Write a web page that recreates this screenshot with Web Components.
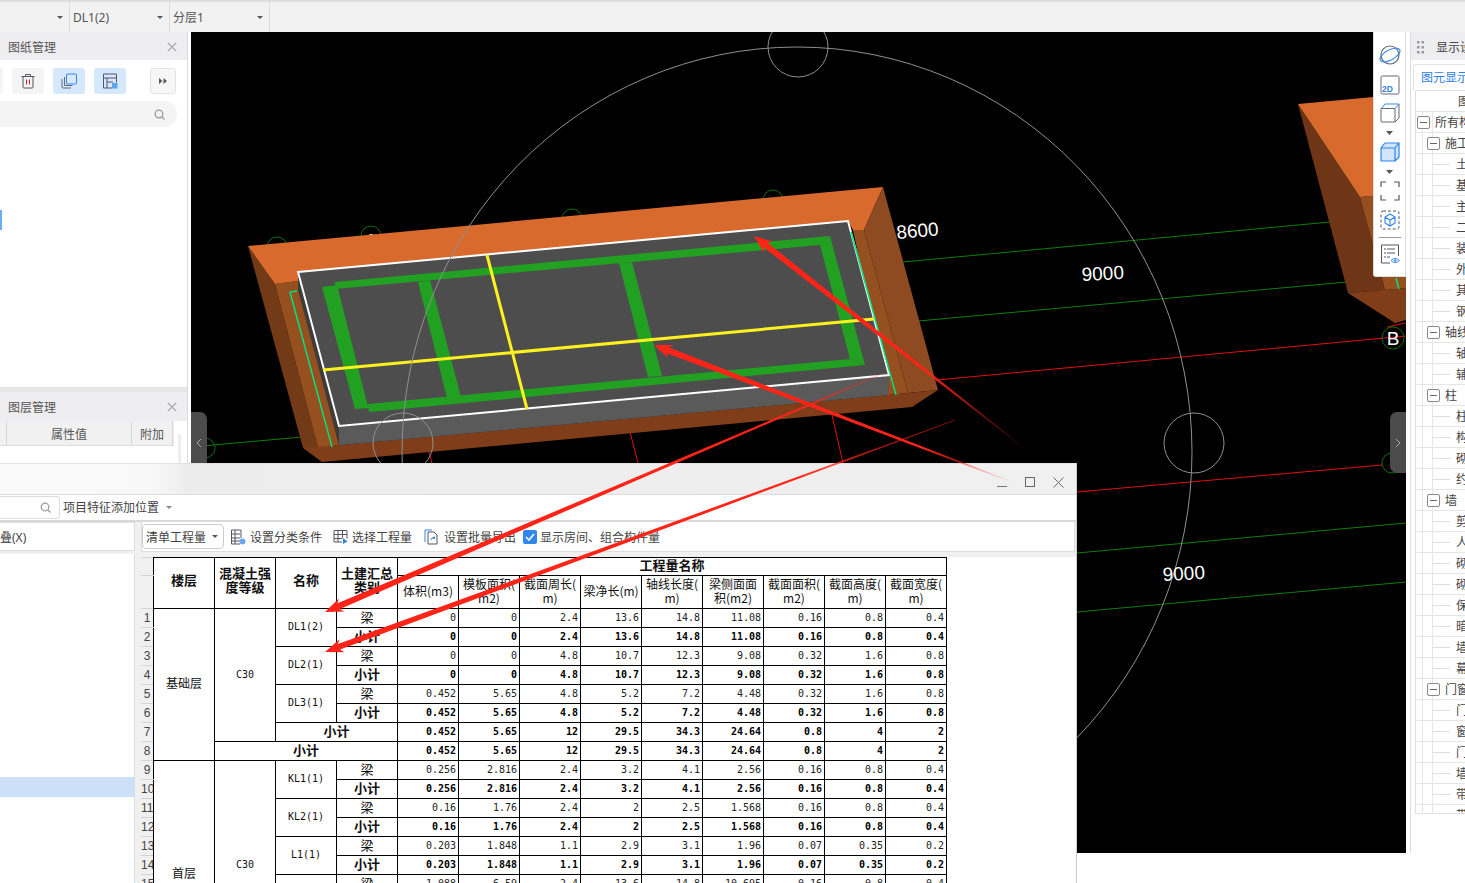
<!DOCTYPE html>
<html lang="zh">
<head>
<meta charset="utf-8">
<title>工程量</title>
<style>
    html, body { margin: 0; padding: 0; background: #fff; }
    body {
        position: relative;
        width: 1465px;
        height: 883px;
        overflow: hidden;
        font: 12px "Noto Sans", "Noto Sans CJK SC", sans-serif;
        color: #555;
    }
</style>
</head>
<body>
<app-frame>
    <top-bar slot="top"></top-bar>
    <left-column slot="left"></left-column>
    <cad-view slot="main"></cad-view>
    <right-panel slot="right"></right-panel>
</app-frame>
<float-window>
    <qty-table></qty-table>
</float-window>
<arrow-marks></arrow-marks>

<script>
const UI_FONT = '"Noto Sans", "Noto Sans CJK SC", sans-serif';

class AppFrame extends HTMLElement {
    constructor() {
        super();
        this.attachShadow({ mode: 'open' });
        this.shadowRoot.innerHTML = `
            <style>
                :host {
                    display: grid;
                    grid-template-columns: 188px 3px 1215px 4px 55px;
                    grid-template-rows: 32px 821px 30px;
                    width: 1465px;
                    height: 883px;
                }
                ::slotted([slot=top]) { grid-column: 1 / -1; grid-row: 1; }
                ::slotted([slot=left]) { grid-column: 1; grid-row: 2; }
                ::slotted([slot=main]) { grid-column: 3; grid-row: 2; }
                ::slotted([slot=right]) { grid-column: 5; grid-row: 2; }
            </style>
            <slot name="top"></slot>
            <slot name="left"></slot>
            <slot name="main"></slot>
            <slot name="right"></slot>
        `;
    }
}

class TopSelect extends HTMLElement {
    constructor() {
        super();
        this.attachShadow({ mode: 'open' });
        this.shadowRoot.innerHTML = `
            <style>
                :host {
                    display: flex;
                    align-items: center;
                    justify-content: space-between;
                    box-sizing: border-box;
                    height: 30px;
                    padding: 0 6px 0 3px;
                    border-right: 1px solid #dcdcdc;
                    font: 12px ${UI_FONT};
                    color: #555;
                }
                i {
                    width: 0;
                    height: 0;
                    border-left: 3px solid transparent;
                    border-right: 3px solid transparent;
                    border-top: 3px solid #555;
                }
            </style>
            <span><slot></slot></span><i></i>
        `;
    }
}

class TopBar extends HTMLElement {
    constructor() {
        super();
        this.attachShadow({ mode: 'open' });
        this.shadowRoot.innerHTML = `
            <style>
                :host {
                    display: flex;
                    box-sizing: border-box;
                    height: 32px;
                    background: #f2f2f2;
                    border-top: 2px solid #dedede;
                }
                top-select:nth-of-type(1) { width: 70px; }
                top-select:nth-of-type(2) { width: 100px; }
                top-select:nth-of-type(3) { width: 100px; }
            </style>
            <top-select></top-select>
            <top-select>DL1(2)</top-select>
            <top-select>分层1</top-select>
        `;
    }
}

class SidePanel extends HTMLElement {
    constructor() {
        super();
        this.attachShadow({ mode: 'open' });
        this.shadowRoot.innerHTML = `
            <style>
                :host {
                    display: flex;
                    flex-direction: column;
                    background: #fff;
                    overflow: hidden;
                }
                header {
                    display: flex;
                    flex: none;
                    align-items: center;
                    justify-content: space-between;
                    box-sizing: border-box;
                    height: var(--head-height, 28px);
                    padding: var(--head-pad, 0) 10px 0 8px;
                    background: #eeeef0;
                    font: 12px ${UI_FONT};
                    color: #555;
                }
                svg { display: block; }
            </style>
            <header>
                <span></span>
                <svg width="10" height="10" viewBox="0 0 10 10"><path d="M1 1l8 8M9 1l-8 8" stroke="#aaa" stroke-width="1.2"/></svg>
            </header>
            <slot></slot>
        `;
    }

    connectedCallback() {
        this.shadowRoot.querySelector('span').textContent = this.getAttribute('label') || '';
    }
}

class LeftColumn extends HTMLElement {
    constructor() {
        super();
        this.attachShadow({ mode: 'open' });
        this.shadowRoot.innerHTML = `
            <style>
                :host {
                    display: flex;
                    flex-direction: column;
                    gap: 5px;
                    box-sizing: border-box;
                    height: 821px;
                    background: #e6e6e6;
                    border-right: 1px solid #dcdcdc;
                    font: 12px ${UI_FONT};
                    color: #555;
                }
                .drawings { height: 355px; flex: none; --head-pad: 2px; }
                .layers { flex: 1; --head-height: 29px; }
                .tools {
                    display: flex;
                    align-items: center;
                    gap: 9px;
                    height: 26px;
                    margin: 8px 0 0 -29px;
                }
                .btn {
                    display: flex;
                    align-items: center;
                    justify-content: center;
                    width: 32px;
                    height: 26px;
                    border-radius: 3px;
                    background: #f4f4f4;
                    flex: none;
                }
                .btn.on { background: #d6e8fc; }
                .btn.play {
                    box-sizing: border-box;
                    width: 26px;
                    margin-left: 15px;
                    border: 1px solid #e2e2e2;
                    background: #f7f7f7;
                }
                .search {
                    display: flex;
                    align-items: center;
                    justify-content: flex-end;
                    box-sizing: border-box;
                    width: 177px;
                    height: 26px;
                    margin-top: 7px;
                    padding-right: 12px;
                    border-radius: 0 13px 13px 0;
                    background: #f4f4f4;
                }
                .mark {
                    position: absolute;
                    left: 0;
                    top: 210px;
                    width: 2px;
                    height: 20px;
                    background: #6aaef5;
                }
                .head {
                    display: grid;
                    grid-template-columns: 7px 125px 41px;
                    height: 24px;
                    background: #f1f1f1;
                    border-bottom: 1px solid #ddd;
                    width: 174px;
                }
                .head span {
                    display: flex;
                    align-items: center;
                    justify-content: center;
                    padding-top: 2px;
                    border-right: 1px solid #d6d6d6;
                }
                .track {
                    position: absolute;
                    left: 178px;
                    top: 434px;
                    width: 3px;
                    height: 40px;
                    border-radius: 2px;
                    background: #eee;
                }
                svg { display: block; }
            </style>
            <side-panel class="drawings" label="图纸管理">
                <div class="tools">
                    <div class="btn"></div>
                    <div class="btn">
                        <svg width="16" height="16" viewBox="0 0 16 16" fill="none" stroke="#556">
                            <path d="M1.5 3.5h13M5.5 3.5V1.5h5v2M3 3.5v10.5a1 1 0 0 0 1 1h8a1 1 0 0 0 1-1V3.5"/>
                            <path d="M6.5 6.5v5M9.5 6.5v5" stroke="#e02020"/>
                        </svg>
                    </div>
                    <div class="btn on">
                        <svg width="16" height="16" viewBox="0 0 16 16" fill="none">
                            <path d="M1 6v8a1 1 0 0 0 1 1h8M3.5 4v8.5h8" stroke="#667"/>
                            <rect x="5.5" y="1" width="10" height="10" rx="1" stroke="#2f86ec"/>
                        </svg>
                    </div>
                    <div class="btn on">
                        <svg width="16" height="16" viewBox="0 0 16 16" fill="none" stroke="#556">
                            <path d="M10 15H1.500V1h13v8.500M1.500 5h13M5 5v10M5 9h6"/>
                            <rect x="10" y="10" width="5.500" height="5.500" fill="#5fa2ee" stroke="none"/>
                        </svg>
                    </div>
                    <div class="btn play">
                        <svg width="8" height="6" viewBox="0 0 8 6" fill="#556"><path d="M0 0l3.500 3L0 6zM4.500 0L8 3 4.500 6z"/></svg>
                    </div>
                </div>
                <div class="search">
                    <svg width="11" height="11" viewBox="0 0 11 11" fill="none" stroke="#999" stroke-width="1.300"><circle cx="5" cy="5" r="3.800"/><path d="M8 8l2.500 2.500"/></svg>
                </div>
                <div class="mark"></div>
            </side-panel>
            <side-panel class="layers" label="图层管理">
                <div class="head"><span></span><span>属性值</span><span>附加</span></div>
                <div class="track"></div>
            </side-panel>
        `;
    }
}

class CadView extends HTMLElement {
    constructor() {
        super();
        this.attachShadow({ mode: 'open' });
        this.shadowRoot.innerHTML = `
            <style>
                :host {
                    display: block;
                    position: relative;
                    width: 1215px;
                    height: 821px;
                    background: #000;
                    overflow: hidden;
                }
                svg.scene { display: block; }
                text { font-family: "Liberation Sans", sans-serif; fill: #fff; }
                .handle {
                    position: absolute;
                    top: 380px;
                    width: 16px;
                    height: 61px;
                    background: #4b4b4b;
                    display: flex;
                    align-items: center;
                    justify-content: center;
                }
                .handle.l { left: 0; border-radius: 0 7px 7px 0; }
                .handle.r { right: 0; border-radius: 7px 0 0 7px; }
            </style>
            <svg class="scene" width="1215" height="821" viewBox="191 32 1215 821">
                <!-- axis lines behind the model -->
                <g fill="none" stroke-width="1">
                    <path d="M191 447L302 437M903 262L1330 222M918 321L1347 282M1077 553L1406 523M1077 612L1406 582" stroke="#0a800a"/>
                    <path d="M937 380L1406 336M1077 492L1382 465M630 432L638 463M832 415L843 463M429 452L432 463M1387 327L1406 323" stroke="#e01010"/>
                    <path d="M843 462L955 420" stroke="#701008"/>
                    <g stroke="#0a6e0a">
                        <circle cx="277" cy="247" r="10"/>
                        <circle cx="371" cy="236" r="10"/>
                        <circle cx="572" cy="219" r="10"/>
                        <circle cx="773" cy="200" r="10"/>
                        <circle cx="205" cy="448" r="10"/>
                        <circle cx="1392" cy="463" r="10"/>
                        <circle cx="1393" cy="338" r="11"/>
                    </g>
                </g>
                <g font-size="13" text-anchor="middle">
                    <text x="277" y="254">1</text>
                    <text x="371" y="243">2</text>
                    <text x="572" y="226">3</text>
                    <text x="775" y="207">4</text>
                </g>
                <text x="1393" y="345" font-size="19" text-anchor="middle">B</text>

                <!-- far block, cut by the toolbar -->
                <polygon points="1298,104 1360,197 1385,290 1348,293" fill="#6e3616"/>
                <polygon points="1360,197 1406,193 1406,288 1385,290" fill="#96501f"/>
                <polygon points="1298,104 1406,94 1406,193 1360,197" fill="#d96a2e"/>
                <polygon points="1348,293 1406,288 1406,320 1395,323" fill="#7f3d1a"/>
                <path d="M1396 278L1399 289" stroke="#00e080" stroke-width="1.500"/>

                <!-- model -->
                <polygon points="248,246 275,284 318,448 303,448" fill="#733a18"/>
                <polygon points="275,284 298,281 339,445 318,448" fill="#96501f"/>
                <polygon points="248,246 883,187 864,230 853,230 848,221 298,272 298,281 275,284" fill="#d96a2e"/>
                <polygon points="883,187 938,390 908,393 864,230" fill="#8e4a20"/>
                <polygon points="853,230 864,230 908,393 888,395" fill="#96501f"/>
                <polygon points="303,448 339,445 888,395 938,390 912,407 322,462" fill="#7f3d1a"/>
                <polygon points="298,272 848,221 889,375 888,395 339,445 339,426" fill="#4d4d4d"/>
                <polygon points="298,272 339,426 339,445 298,290" fill="#3c3c3c"/>
                <polygon points="339,426 889,375 888,395 339,445" fill="#5a5a5a"/>
                <path d="M297 291L290 292L332 447" fill="none" stroke="#00e080" stroke-width="1.500"/>

                <g fill="#22a022">
                    <polygon points="335,282 830,236 820,245 335,289"/>
                    <polygon points="830,236 865,365 850,359 820,245"/>
                    <polygon points="368,404 850,359 865,365 369,412"/>
                    <polygon points="322,287 337,285 367,403 369,408 355,409"/>
                    <polygon points="418,282 430,280 461,397 447,398"/>
                    <polygon points="619,263 632,262 662,376 648,377"/>
                </g>
                <polygon points="298,272 848,221 889,375 339,426" fill="none" stroke="#fff" stroke-width="2"/>
                <path d="M851 232L896 395" fill="none" stroke="#00e080" stroke-width="1.500"/>
                <path d="M323 370L874 319M487 255L527 409" fill="none" stroke="#fff020" stroke-width="3"/>

                <!-- control circle drawn over the model -->
                <g fill="none" stroke="#909090" stroke-width="1">
                    <ellipse cx="797" cy="452" rx="395" ry="405"/>
                    <circle cx="798" cy="47" r="30"/>
                    <circle cx="403" cy="443" r="30"/>
                    <circle cx="1194" cy="443" r="30"/>
                </g>
                <g>
                    <text x="897" y="239" font-size="19" transform="rotate(-5 897 239)">8600</text>
                    <text x="1082" y="281" font-size="19" transform="rotate(-3 1082 281)">9000</text>
                    <text x="1163" y="581" font-size="19" transform="rotate(-3 1163 581)">9000</text>
                </g>
            </svg>
            <div class="handle l"><svg width="6" height="10" viewBox="0 0 6 10" fill="none" stroke="#aaa"><path d="M5 1L1 5l4 4"/></svg></div>
            <div class="handle r"><svg width="6" height="10" viewBox="0 0 6 10" fill="none" stroke="#aaa"><path d="M1 1l4 4-4 4"/></svg></div>
            <view-tools></view-tools>
        `;
    }
}

class ViewTools extends HTMLElement {
    constructor() {
        super();
        this.attachShadow({ mode: 'open' });
        this.shadowRoot.innerHTML = `
            <style>
                :host {
                    position: absolute;
                    top: 0;
                    right: 0;
                    display: flex;
                    flex-direction: column;
                    align-items: center;
                    box-sizing: border-box;
                    width: 33px;
                    height: 245px;
                    background: #fff;
                    border-radius: 0 0 0 3px;
                    border-left: 1px solid #ddd;
                    border-right: 1px solid #ddd;
                    border-bottom: 1px solid #ddd;
                }
                svg { display: block; flex: none; }
                hr {
                    width: 22px;
                    margin: 7px 0 6px;
                    border: 0;
                    border-top: 1px solid #999;
                }
                text { font: bold 8.5px "Liberation Sans", sans-serif; fill: #2f7fe0; }
            </style>
            <svg style="margin-top:12px" width="22" height="22" viewBox="0 0 22 22" fill="none">
                <circle cx="11" cy="11" r="9" stroke="#667" stroke-width="1.200"/>
                <ellipse cx="11" cy="11" rx="11" ry="5" transform="rotate(-28 11 11)" stroke="#3d8bec" stroke-width="1.200"/>
            </svg>
            <svg style="margin-top:9px" width="20" height="20" viewBox="0 0 20 20" fill="none">
                <rect x="1" y="1" width="18" height="18" rx="1.500" stroke="#667"/>
                <text x="2" y="17">2D</text>
            </svg>
            <svg style="margin-top:8px" width="20" height="20" viewBox="0 0 20 20" fill="none" stroke="#667">
                <path d="M4.500 5.500H15V18a1 1 0 0 1-1 1H2a1 1 0 0 1-1-1V6a1 1 0 0 1 .5-.5z"/>
                <path d="M15 19l4-4V1" />
                <path d="M1 6l4-5h14l-4 4.500" stroke="#3d8bec"/>
            </svg>
            <svg style="margin-top:7px" width="7" height="6" viewBox="0 0 7 6"><path d="M0 1h7L3.500 5z" fill="#556"/></svg>
            <svg style="margin-top:6px" width="20" height="20" viewBox="0 0 20 20" fill="#d1e4fb" stroke="#2f86ec" stroke-width="1.200" stroke-linejoin="round">
                <path d="M1 6v13h14V6zM1 6l4-5h14l-4 5zM15 6l4-5v14l-4 4z"/>
            </svg>
            <svg style="margin-top:7px" width="7" height="6" viewBox="0 0 7 6"><path d="M0 1h7L3.500 5z" fill="#556"/></svg>
            <svg style="margin-top:6px" width="20" height="20" viewBox="0 0 20 20" fill="none" stroke="#556" stroke-width="1.200">
                <path d="M1 6V1h5M14 1h5v5M19 14v5h-5M6 19H1v-5"/>
            </svg>
            <svg style="margin-top:9px" width="20" height="20" viewBox="0 0 20 20" fill="none">
                <rect x="1" y="1" width="18" height="18" rx="2" stroke="#556" stroke-dasharray="3 2"/>
                <path d="M10 4l5 3v6l-5 3-5-3V7zM5 7l5 3 5-3M10 10v6" stroke="#2f86ec" stroke-width="1.100"/>
            </svg>
            <hr>
            <svg width="20" height="20" viewBox="0 0 20 20" fill="none">
                <path d="M10 19H1.500V1h17v11" stroke="#556"/>
                <path d="M4 5h2M7 5h8M4 9h2M7 9h8M4 13h2M7 13h3" stroke="#556"/>
                <path d="M11 16.500q4-4 8.500 0q-4.500 4-8.500 0z" stroke="#3d8bec"/>
                <circle cx="15.200" cy="16.500" r="1.200" fill="#3d8bec"/>
            </svg>
        `;
    }
}

const TREE = [
    [0, '所有构'], [1, '施工'], [2, '土'], [2, '基'], [2, '主'], [2, '二'], [2, '装'], [2, '外'], [2, '其'], [2, '钢'],
    [1, '轴线'], [2, '轴'], [2, '辅'],
    [1, '柱'], [2, '柱'], [2, '构'], [2, '砌'], [2, '约'],
    [1, '墙'], [2, '剪'], [2, '人'], [2, '砌'], [2, '砌'], [2, '保'], [2, '暗'], [2, '墙'], [2, '幕'],
    [1, '门窗'], [2, '门'], [2, '窗'], [2, '门'], [2, '墙'], [2, '带'], [2, '带']
];

class RightPanel extends HTMLElement {
    constructor() {
        super();
        this.attachShadow({ mode: 'open' });
        const rows = TREE.map(([level, name]) => {
            const box = '<i class="box"></i>';
            if (level === 0) return `<div class="row l0">${box}<span>${name}</span></div>`;
            if (level === 1) return `<div class="row l1">${box}<span>${name}</span></div>`;
            return `<div class="row l2"><i class="dash"></i><span>${name}</span></div>`;
        }).join('');
        this.shadowRoot.innerHTML = `
            <style>
                :host {
                    display: block;
                    position: relative;
                    box-sizing: border-box;
                    height: 821px;
                    width: 55px;
                    overflow: hidden;
                    background: #fff;
                    border-left: 1px solid #dcdcdc;
                    font: 12px ${UI_FONT};
                    color: #444;
                }
                header {
                    display: flex;
                    align-items: center;
                    gap: 12px;
                    box-sizing: border-box;
                    height: 28px;
                    padding: 2px 0 0 6px;
                    background: #eeeef0;
                    white-space: nowrap;
                }
                header svg { flex: none; }
                .tab {
                    box-sizing: border-box;
                    width: 60px;
                    height: 26px;
                    margin: 4px 0 0 2px;
                    padding: 3px 0 0 7px;
                    border: 1px solid #e2e2e2;
                    border-bottom: 0;
                    border-radius: 3px 0 0 0;
                    color: #2f80e8;
                    white-space: nowrap;
                }
                .grid {
                    width: 60px;
                    margin-left: 4px;
                    border-left: 1px solid #e0e0e0;
                    border-top: 1px solid #e0e0e0;
                }
                .title {
                    height: 21px;
                    line-height: 21px;
                    padding-left: 42px;
                    border-bottom: 1px solid #e0e0e0;
                    box-sizing: border-box;
                }
                .tree {
                    height: 701px;
                    overflow: hidden;
                    border-bottom: 1px solid #e0e0e0;
                    background: linear-gradient(#e6e6e6, #e6e6e6) 6px 0 / 1px 100% no-repeat,
                                linear-gradient(#e6e6e6, #e6e6e6) 16px 0 / 1px 100% no-repeat;
                }
                .row {
                    position: relative;
                    display: flex;
                    align-items: center;
                    box-sizing: border-box;
                    height: 21px;
                    border-bottom: 1px solid #e6e6e6;
                    white-space: nowrap;
                }
                .box {
                    position: relative;
                    box-sizing: border-box;
                    width: 13px;
                    height: 13px;
                    flex: none;
                    border: 1px solid #888;
                    border-radius: 2px;
                    background: #fff;
                }
                .box::after {
                    content: "";
                    position: absolute;
                    left: 2px;
                    right: 2px;
                    top: 5px;
                    height: 1px;
                    background: #666;
                }
                .l0 { padding-left: 1px; }
                .l0 span { margin-left: 5px; }
                .l1 { padding-left: 11px; }
                .l1 span { margin-left: 5px; }
                .l2 { padding-left: 17px; }
                .dash { width: 17px; height: 1px; background: #ddd; flex: none; }
                .l2 span { margin-left: 6px; }
            </style>
            <header>
                <svg width="7" height="13" viewBox="0 0 7 13" fill="#999">
                    <rect width="2.500" height="2.500"/><rect x="4.500" width="2.500" height="2.500"/>
                    <rect y="5" width="2.500" height="2.500"/><rect x="4.500" y="5" width="2.500" height="2.500"/>
                    <rect y="10" width="2.500" height="2.500"/><rect x="4.500" y="10" width="2.500" height="2.500"/>
                </svg>
                <span>显示设</span>
            </header>
            <div class="tab">图元显示</div>
            <div class="grid">
                <div class="title">图</div>
                <div class="tree">${rows}</div>
            </div>
        `;
    }
}

class FloatWindow extends HTMLElement {
    constructor() {
        super();
        this.attachShadow({ mode: 'open' });
        this.shadowRoot.innerHTML = `
            <style>
                :host {
                    position: absolute;
                    left: 0;
                    top: 463px;
                    display: flex;
                    flex-direction: column;
                    box-sizing: border-box;
                    width: 1077px;
                    height: 420px;
                    background: #fff;
                    border-right: 1px solid #ccc;
                    overflow: hidden;
                    font: 12px ${UI_FONT};
                    color: #444;
                }
                .title {
                    display: flex;
                    flex: none;
                    align-items: center;
                    justify-content: flex-end;
                    gap: 18px;
                    height: 31px;
                    padding: 6px 12px 0 0;
                    background: linear-gradient(90deg, #fafafa 0, #f8f8f8 150px, #ececec 190px, #f0f0f0 100%);
                    border-top: 1px solid #e2e2e2;
                    box-sizing: border-box;
                }
                .search-row {
                    display: flex;
                    flex: none;
                    align-items: center;
                    gap: 3px;
                    box-sizing: border-box;
                    height: 28px;
                    padding-bottom: 1px;
                    border-top: 1px solid #ddd;
                    border-bottom: 2px solid #d8d8d8;
                }
                .find {
                    display: flex;
                    align-items: center;
                    justify-content: flex-end;
                    box-sizing: border-box;
                    width: 60px;
                    height: 23px;
                    padding-right: 8px;
                    border: 1px solid #ddd;
                    border-left: 0;
                    border-radius: 0 4px 4px 0;
                }
                .caret {
                    width: 0;
                    height: 0;
                    border-left: 3px solid transparent;
                    border-right: 3px solid transparent;
                    border-top: 3px solid #888;
                }
                .body { display: flex; flex: 1; min-height: 0; background: #f0f0f0; }
                .list {
                    display: flex;
                    flex-direction: column;
                    flex: none;
                    width: 135px;
                    gap: 3px;
                }
                .fold {
                    box-sizing: border-box;
                    height: 29px;
                    padding-top: 1px;
                    line-height: 27px;
                    border: 1px solid #ddd;
                    border-left: 0;
                    background: #fff;
                    font-size: 12px;
                }
                .items {
                    flex: 1;
                    padding-top: 223px;
                    background: #fff;
                    border-right: 1px solid #ddd;
                }
                .sel { height: 20px; background: #cce0f8; }
                .main { flex: 1; margin-left: 6px; min-width: 0; }
                .bar {
                    display: flex;
                    align-items: center;
                    box-sizing: border-box;
                    height: 30px;
                    margin-right: 1px;
                    background: #fff;
                    border: 1px solid #ddd;
                    border-top: 0;
                    white-space: nowrap;
                }
                .select {
                    display: flex;
                    align-items: center;
                    justify-content: space-between;
                    box-sizing: border-box;
                    width: 82px;
                    height: 25px;
                    padding: 0 5px 0 3px;
                    border: 1px solid #ccc;
                    border-radius: 4px;
                }
                .act { display: flex; align-items: center; gap: 4px; }
                .check {
                    display: flex;
                    align-items: center;
                    justify-content: center;
                    width: 14px;
                    height: 14px;
                    border-radius: 2px;
                    background: #2f86ec;
                }
                .sheet {
                    height: 330px;
                    overflow: hidden;
                    background: #fff;
                    border-top: 5px solid #f0f0f0;
                }
                svg { display: block; flex: none; }
            </style>
            <div class="title">
                <svg width="10" height="10" viewBox="0 0 10 10"><path d="M0 9.500h10" stroke="#777"/></svg>
                <svg width="10" height="10" viewBox="0 0 10 10"><rect x=".5" y=".5" width="9" height="9" fill="none" stroke="#666"/></svg>
                <svg width="11" height="11" viewBox="0 0 11 11"><path d="M.5.5l10 10M10.500.5l-10 10" stroke="#666"/></svg>
            </div>
            <div class="search-row">
                <div class="find">
                    <svg width="11" height="11" viewBox="0 0 11 11" fill="none" stroke="#999" stroke-width="1.200"><circle cx="5" cy="5" r="3.800"/><path d="M8 8l2.500 2.500"/></svg>
                </div>
                <span>项目特征添加位置</span>
                <i class="caret" style="margin-left:4px"></i>
            </div>
            <div class="body">
                <div class="list">
                    <div class="fold">叠(X)</div>
                    <div class="items"><div class="sel"></div></div>
                </div>
                <div class="main">
                    <div class="bar">
                        <div class="select"><span>清单工程量</span><i class="caret" style="border-top-color:#555"></i></div>
                        <div class="act" style="margin-left:6px">
                            <svg width="16" height="16" viewBox="0 0 16 16" fill="none" stroke="#556"><path d="M10 1H1.500v14H10M1.500 5H10M1.500 9H10M1.500 12H10M5 1v14"/><path d="M10 1h1v8"/><circle cx="12.500" cy="12.500" r="3" fill="#6aa8ee" stroke="none"/></svg>
                            <span>设置分类条件</span>
                        </div>
                        <div class="act" style="margin-left:11px">
                            <svg width="15" height="16" viewBox="0 0 15 16" fill="none" stroke="#556"><path d="M1 1.500h13v8M1 1.500V13h8M1 5.500h13M1 9.500h8M5 1.500V13M9.500 1.500V9"/><path d="M10 9l4.500 3.500L10 15z" fill="#2f86ec" stroke="none"/></svg>
                            <span>选择工程量</span>
                        </div>
                        <div class="act" style="margin-left:11px;gap:5px">
                            <svg width="16" height="16" viewBox="0 0 16 16" fill="none" stroke="#2f86ec"><path d="M9 1H2v12"/><path d="M5 3h6l3 3v9H5z" stroke="#556"/><path d="M8 11a2.500 2.500 0 0 1 4-2M11.500 7.500v2h-2"/></svg>
                            <span>设置批量导出</span>
                        </div>
                        <div class="act" style="margin-left:7px;gap:3px">
                            <div class="check"><svg width="10" height="8" viewBox="0 0 10 8" fill="none" stroke="#fff" stroke-width="1.600"><path d="M1 4l3 3 5-6"/></svg></div>
                            <span>显示房间、组合构件量</span>
                        </div>
                    </div>
                    <div class="sheet"><slot></slot></div>
                </div>
            </div>
        `;
    }
}

const NUMS = {
    r1: ['0', '0', '2.4', '13.6', '14.8', '11.08', '0.16', '0.8', '0.4'],
    r3: ['0', '0', '4.8', '10.7', '12.3', '9.08', '0.32', '1.6', '0.8'],
    r5: ['0.452', '5.65', '4.8', '5.2', '7.2', '4.48', '0.32', '1.6', '0.8'],
    r7: ['0.452', '5.65', '12', '29.5', '34.3', '24.64', '0.8', '4', '2'],
    r9: ['0.256', '2.816', '2.4', '3.2', '4.1', '2.56', '0.16', '0.8', '0.4'],
    r11: ['0.16', '1.76', '2.4', '2', '2.5', '1.568', '0.16', '0.8', '0.4'],
    r13: ['0.203', '1.848', '1.1', '2.9', '3.1', '1.96', '0.07', '0.35', '0.2'],
    r15: ['1.088', '6.59', '2.4', '13.6', '14.8', '10.695', '0.16', '0.8', '0.4']
};

const HEADS = ['体积(m3)', '模板面积(<br>m2)', '截面周长(<br>m)', '梁净长(m)', '轴线长度(<br>m)', '梁侧面面<br>积(m2)', '截面面积(<br>m2)', '截面高度(<br>m)', '截面宽度(<br>m)'];

class QtyTable extends HTMLElement {
    constructor() {
        super();
        this.attachShadow({ mode: 'open' });
        const nums = (list, bold) => Array.from({ length: 9 }, (_, i) =>
            `<td class="n${bold ? ' b' : ''}">${list ? list[i] : ''}</td>`).join('');
        const no = n => `<td class="no">${n}</td>`;
        const name = label => `<td class="m" rowspan="2">${label}</td>`;
        const pair = (n, label, list, lead = '') => `
            <tr>${no(n)}${lead}${name(label)}<td class="c">梁</td>${nums(list)}</tr>
            <tr>${no(n + 1)}<td class="c b">小计</td>${nums(list, true)}</tr>`;
        const blank = lead => `<tr>${no('')}${lead}${nums(null)}</tr>`;

        this.shadowRoot.innerHTML = `
            <style>
                :host { display: block; width: 808px; margin-left: -1px; }
                table {
                    table-layout: fixed;
                    border-collapse: collapse;
                    width: 807px;
                    font: 12px "Noto Sans CJK SC", sans-serif;
                    color: #111;
                }
                col.no { width: 13px; }
                col.w { width: 61px; }
                tr { height: 19px; }
                tr.h1 { height: 18px; }
                tr.h2 { height: 33px; }
                td, th {
                    padding: 0;
                    border: 1px solid #000;
                    text-align: center;
                    overflow: hidden;
                    white-space: nowrap;
                    line-height: 14px;
                    font-weight: normal;
                }
                th { padding-bottom: 2px; }
                th.b, td.b { font-weight: 700; }
                th.big { font-size: 13px; padding-bottom: 6px; }
                th.big.top { padding-bottom: 3px; }
                td.no {
                    background: #f0f0f0;
                    border: 1px solid #d4d4d4;
                    border-right-color: #000;
                    padding-bottom: 1px;
                    font: 12px "Liberation Sans", sans-serif;
                    color: #444;
                }
                td.m, td.k, td.n { font-family: "DejaVu Sans Mono", "Noto Sans CJK SC", monospace; font-size: 10px; }
                td.m { padding-bottom: 2px; }
                td.n { text-align: right; padding-right: 2px; color: #222; }
                td.n.b { color: #000; }
                td.c { font-size: 13px; padding-bottom: 3px; }
                td.floor { font-size: 12px; padding-bottom: 4px; }
            </style>
            <table>
                <colgroup>
                    <col class="no"><col class="w"><col class="w"><col class="w"><col class="w">
                    <col class="w"><col class="w"><col class="w"><col class="w"><col class="w">
                    <col class="w"><col class="w"><col class="w"><col class="w">
                </colgroup>
                <tr class="h1">
                    <td class="no"></td>
                    <th class="b big" rowspan="2">楼层</th>
                    <th class="b big" rowspan="2">混凝土强<br>度等级</th>
                    <th class="b big" rowspan="2">名称</th>
                    <th class="b big" rowspan="2">土建汇总<br>类别</th>
                    <th class="b big top" colspan="9">工程量名称</th>
                </tr>
                <tr class="h2">
                    <td class="no"></td>
                    ${HEADS.map(h => `<th>${h}</th>`).join('')}
                </tr>
                ${pair(1, 'DL1(2)', NUMS.r1, '<td class="floor" rowspan="8">基础层</td><td class="k" rowspan="7">C30</td>')}
                ${pair(3, 'DL2(1)', NUMS.r3)}
                ${pair(5, 'DL3(1)', NUMS.r5)}
                <tr>${no(7)}<td class="c b" colspan="2">小计</td>${nums(NUMS.r7, true)}</tr>
                <tr>${no(8)}<td class="c b" colspan="3">小计</td>${nums(NUMS.r7, true)}</tr>
                ${pair(9, 'KL1(1)', NUMS.r9, '<td class="floor" rowspan="12">首层</td><td class="k" rowspan="11">C30</td>')}
                ${pair(11, 'KL2(1)', NUMS.r11)}
                ${pair(13, 'L1(1)', NUMS.r13)}
                <tr>${no(15)}<td class="m" rowspan="2"></td><td class="c">梁</td>${nums(NUMS.r15)}</tr>
                ${blank('<td></td>')}
                <!-- rows past the window bottom only keep the first-floor cells centred, so they stay blank -->
                ${blank('<td rowspan="2"></td><td></td>')}
                ${blank('<td></td>')}
                ${blank('<td colspan="2"></td>')}
                ${blank('<td colspan="3"></td>')}
            </table>
        `;
    }
}

// tapered annotation arrows, sitting over the window and the canvas
const ARROWS = [
    { tip: [325, 612], tail: [900, 366], fade: 0.82 },
    { tip: [325, 652], tail: [955, 420], fade: 0.75 },
    { tip: [654, 345], tail: [1012, 482], fade: 0.75 },
    { tip: [754, 236], tail: [1032, 454], fade: 0.6 }
];

class ArrowMarks extends HTMLElement {
    constructor() {
        super();
        this.attachShadow({ mode: 'open' });
        let defs = '';
        let shapes = '';
        ARROWS.forEach((a, i) => {
            const [x1, y1] = a.tip;
            const [x2, y2] = a.tail;
            const len = Math.hypot(x2 - x1, y2 - y1);
            const ux = (x2 - x1) / len;
            const uy = (y2 - y1) / len;
            const at = (along, side) => `${(x1 + ux * along - uy * side).toFixed(1)},${(y1 + uy * along + ux * side).toFixed(1)}`;
            const points = [
                at(0, 0), at(18, 7), at(15, 3), at(len, 0.4), at(len, -0.4), at(15, -3), at(18, -7)
            ].join(' ');
            defs += `<linearGradient id="a${i}" gradientUnits="userSpaceOnUse" x1="${x1}" y1="${y1}" x2="${x2}" y2="${y2}">
                <stop offset="0" stop-color="#ff2418"/>
                <stop offset="${a.fade}" stop-color="#ff2418"/>
                <stop offset="1" stop-color="#ff2418" stop-opacity="0"/>
            </linearGradient>`;
            shapes += `<polygon points="${points}" fill="url(#a${i})"/>`;
        });
        this.shadowRoot.innerHTML = `
            <style>
                :host { position: absolute; left: 0; top: 0; pointer-events: none; }
                svg { display: block; }
            </style>
            <svg width="1465" height="883" viewBox="0 0 1465 883"><defs>${defs}</defs>${shapes}</svg>
        `;
    }
}

customElements.define('app-frame', AppFrame);
customElements.define('top-select', TopSelect);
customElements.define('top-bar', TopBar);
customElements.define('side-panel', SidePanel);
customElements.define('left-column', LeftColumn);
customElements.define('view-tools', ViewTools);
customElements.define('cad-view', CadView);
customElements.define('right-panel', RightPanel);
customElements.define('float-window', FloatWindow);
customElements.define('qty-table', QtyTable);
customElements.define('arrow-marks', ArrowMarks);
</script>
</body>
</html>
